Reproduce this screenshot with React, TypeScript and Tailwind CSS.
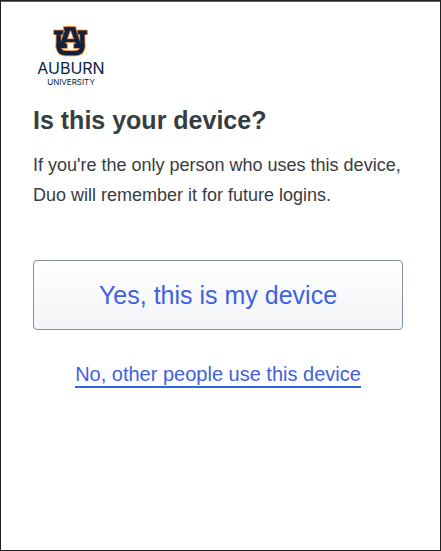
function AuburnLogo() {
  return (
    <svg
      width="76"
      height="62"
      viewBox="0 0 76 62"
      role="img"
      aria-label="Auburn University"
      className="block"
    >
      {/* interlocking AU: orange outline underneath, navy strokes on top */}
      <g fill="none" stroke="#e87722" strokeLinejoin="miter">
        <path d="M20.2 6.4H31.2M43.8 6.4H54.8" strokeWidth="5.4" />
        <path d="M25.7 6V20Q25.7 27.2 33 27.2H42Q49.3 27.2 49.3 20V6" strokeWidth="6" />
        <path d="M22.6 20H34.8M40.2 20H52.4" strokeWidth="5.6" />
        <path d="M30.2 2.7H43.3" strokeWidth="5" />
        <path d="M35 3L29 20M40 3L46 20" strokeWidth="6.4" />
        <path d="M31 14.6H44" strokeWidth="4.4" />
      </g>
      <g fill="none" stroke="#0b2341" strokeLinejoin="miter">
        <path d="M21.2 6.4H30.2M44.8 6.4H53.8" strokeWidth="3.6" />
        <path d="M25.7 6V20Q25.7 27.2 33 27.2H42Q49.3 27.2 49.3 20V6" strokeWidth="4.2" />
        <path d="M23.6 20H33.8M41.2 20H51.4" strokeWidth="3.8" />
        <path d="M31.2 2.7H42.3" strokeWidth="3.2" />
        <path d="M35 3L29 20M40 3L46 20" strokeWidth="4.6" />
        <path d="M31 14.6H44" strokeWidth="2.8" />
      </g>
      <circle cx="53.5" cy="27" r="0.5" fill="#e87722" />
      <text
        x="38"
        y="48"
        textAnchor="middle"
        fill="#0b2341"
        fontFamily="Inter, sans-serif"
        fontSize="16"
      >
        AUBURN
      </text>
      <text
        x="38"
        y="59"
        textAnchor="middle"
        fill="#0b2341"
        fontFamily="Inter, sans-serif"
        fontSize="8"
      >
        UNIVERSITY
      </text>
    </svg>
  );
}

export default function App() {
  return (
    <main className="min-h-screen border border-[#222222] bg-white font-['Liberation_Sans',Arial,sans-serif] text-[#363d42]">
      <div className="h-px bg-[#3a5fe0]" />
      <div className="px-8 pt-6 pb-8">
        <AuburnLogo />

        <h1 className="mt-4 text-[25px] leading-8 font-bold">Is this your device?</h1>
        <p className="mt-3.5 text-lg leading-[30px]">
          If you're the only person who uses this device, Duo will remember it for future logins.
        </p>

        <div className="mt-[50px] mr-[5px] flex flex-col items-center gap-8">
          <button
            type="button"
            className="w-full rounded border border-[#8492a6] bg-linear-to-b from-white to-[#f3f4f7] py-4 text-[25px] leading-9 text-[#4061e0]"
          >
            Yes, this is my device
          </button>
          <a
            href="#other-people"
            className="border-b-2 border-[#2f66e0] text-xl leading-6 text-[#4061e0]"
          >
            No, other people use this device
          </a>
        </div>
      </div>
    </main>
  );
}
